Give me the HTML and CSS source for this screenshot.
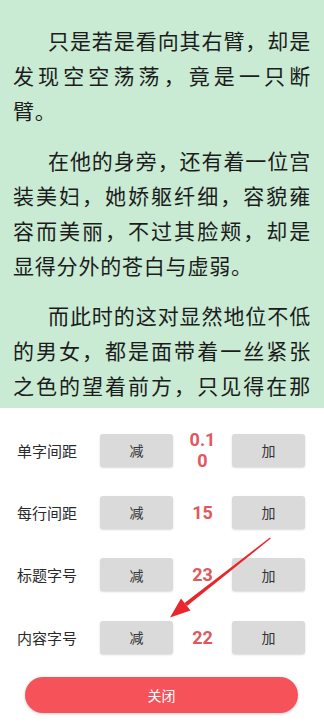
FILE: index.html
```html
<!DOCTYPE html>
<html lang="zh-CN">
<head>
  <meta charset="UTF-8" />
  <meta name="viewport" content="width=device-width, initial-scale=1.0"/>
  <title>阅读设置</title>
  <link rel="stylesheet" href="styles.css">
</head>
<body>

  <div class="reader">
    <p>只是若是看向其右臂，却是发现空空荡荡，竟是一只断臂。</p>
    <p>在他的身旁，还有着一位宫装美妇，她娇躯纤细，容貌雍容而美丽，不过其脸颊，却是显得分外的苍白与虚弱。</p>
    <p class="last">而此时的这对显然地位不低的男女，都是面带着一丝紧张之色的望着前方，只见得在那</p>
  </div>

  <div class="panel">
    <div class="row">
      <span class="label">单字间距</span>
      <button class="btn">减</button>
      <span class="value"><span>0.10</span></span>
      <button class="btn">加</button>
    </div>
    <div class="row">
      <span class="label">每行间距</span>
      <button class="btn">减</button>
      <span class="value"><span>15</span></span>
      <button class="btn">加</button>
    </div>
    <div class="row">
      <span class="label">标题字号</span>
      <button class="btn">减</button>
      <span class="value"><span>23</span></span>
      <button class="btn">加</button>
    </div>
    <div class="row">
      <span class="label">内容字号</span>
      <button class="btn">减</button>
      <span class="value"><span>22</span></span>
      <button class="btn">加</button>
    </div>

    <button class="close">关闭</button>

    <!-- annotation arrow -->
    <svg class="arrow" width="324" height="722" viewBox="0 0 324 722">
      <polygon points="270,537.5 270.8,538.5 187,606 184.5,603" fill="#e8262b"/>
      <polygon points="170,617.5 181,598.5 190.5,610.5" fill="#e8262b"/>
    </svg>
  </div>

</body>
</html>
```

FILE: styles.css
```css
* { box-sizing: border-box; margin: 0; padding: 0; }

body {
  font-family: "Noto Sans CJK SC", "Noto Sans", sans-serif;
  width: 324px;
  height: 722px;
  overflow: hidden;
  background: #fff;
  position: relative;
}

.reader {
  height: 408px;
  background: #c9ebd3;
  padding: 23px 13px 0;
  overflow: hidden;
}

.reader p {
  font-size: 21px;
  line-height: 35px;
  letter-spacing: 0.8px;
  color: #1c1c1c;
  text-indent: 35px;
  text-align: justify;
  text-align-last: left;
  margin-bottom: 15px;
}

.reader p.last {
  text-align-last: justify;
}

.panel {
  padding: 11px 0 0;
}

.row {
  display: flex;
  align-items: center;
  height: 62.3px;
  padding-left: 17px;
}

.label {
  width: 83px;
  font-size: 15px;
  color: #2a2a2a;
}

.btn {
  width: 73px;
  height: 33px;
  border: none;
  border-radius: 3px;
  background: #dadada;
  box-shadow: 0 1px 2px rgba(0, 0, 0, 0.15);
  font-family: inherit;
  font-size: 14px;
  color: #333;
}

.value {
  width: 59px;
  display: flex;
  justify-content: center;
}

.value span {
  width: 28px;
  text-align: center;
  word-break: break-all;
  font-family: Roboto, "Noto Sans", sans-serif;
  font-weight: bold;
  font-size: 18px;
  line-height: 21px;
  color: #e0585e;
}

.close {
  display: block;
  width: 273px;
  height: 36px;
  margin: 9px 0 0 25px;
  border: none;
  border-radius: 18px;
  background: #f5525a;
  box-shadow: 0 1px 3px rgba(0, 0, 0, 0.2);
  color: #fff;
  font-family: inherit;
  font-size: 14px;
}

.arrow {
  position: absolute;
  left: 0;
  top: 0;
  pointer-events: none;
}
```
